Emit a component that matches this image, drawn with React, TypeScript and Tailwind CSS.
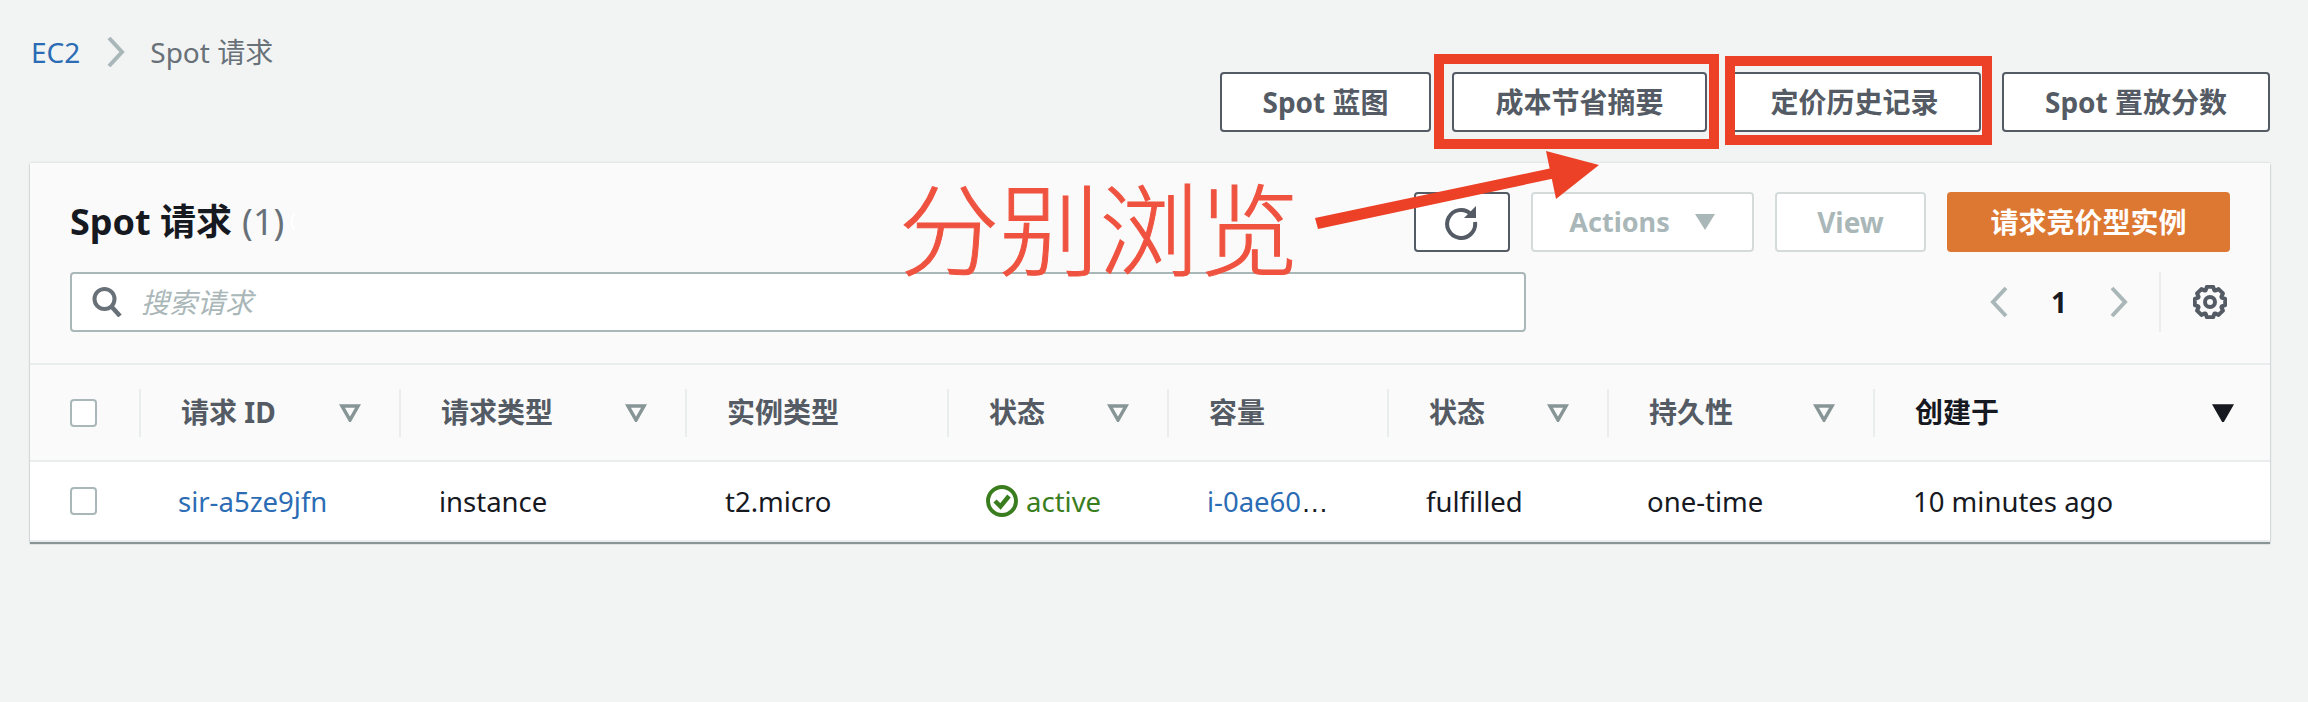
const FONT = "font-['Noto_Sans','Noto_Sans_CJK_SC',sans-serif]";

const gearPoints = Array.from({ length: 8 }, (_, i) => {
  const base = (i * Math.PI) / 4;
  const pts = [
    [12.5, base - 0.36],
    [15.5, base - 0.2],
    [15.5, base + 0.2],
    [12.5, base + 0.36],
  ];
  return pts
    .map(([r, a]) => `${(17 + r * Math.cos(a)).toFixed(2)},${(17 + r * Math.sin(a)).toFixed(2)}`)
    .join(" ");
}).join(" ");

function FilterCaret({ solid = false, color = "#879596" }: { solid?: boolean; color?: string }) {
  return (
    <svg width="22" height="18" viewBox="0 0 22 18" className="shrink-0">
      <polygon
        points="3,2 19,2 11,16"
        fill={solid ? color : "none"}
        stroke={color}
        strokeWidth="3.5"
        strokeLinejoin="miter"
      />
    </svg>
  );
}

function Checkbox() {
  return <div className="w-[27px] h-[28px] rounded-[4px] border-2 border-[#aab7b8] bg-white" />;
}

function Chevron({ dir }: { dir: "left" | "right" }) {
  return (
    <svg width="20" height="32" viewBox="0 0 20 32" fill="none" className="shrink-0">
      <path
        d={dir === "left" ? "M17 2 L4 16 L17 30" : "M3 2 L16 16 L3 30"}
        stroke="#aab7b8"
        strokeWidth="4"
      />
    </svg>
  );
}

function TopButton({ label, className }: { label: string; className: string }) {
  return (
    <button
      className={`h-[60px] rounded-[4px] border-2 border-[#545b64] bg-white text-[28px] font-bold text-[#545b64] ${className}`}
    >
      {label}
    </button>
  );
}

const COLUMNS = [
  { label: "请求 ID", width: "w-[260px]", filter: true },
  { label: "请求类型", width: "w-[286px]", filter: true },
  { label: "实例类型", width: "w-[262px]", filter: false },
  { label: "状态", width: "w-[220px]", filter: true },
  { label: "容量", width: "w-[220px]", filter: false },
  { label: "状态", width: "w-[220px]", filter: true },
  { label: "持久性", width: "w-[266px]", filter: true },
];

export default function App() {
  return (
    <div className={`relative w-[2308px] h-[702px] overflow-hidden bg-[#f2f3f3] ${FONT}`}>
      {/* Breadcrumb + top actions */}
      <div className="flex justify-between pl-[31px] pr-[38px] h-[163px]">
        <nav className="flex items-center h-[32px] mt-[36px] text-[28px] leading-none">
          <a className="text-[#2b6cb5]">EC2</a>
          <svg width="18" height="30" viewBox="0 0 18 30" fill="none" className="ml-[27px] mr-[25px]">
            <path d="M2 1 L15 15 L2 29" stroke="#aab7b8" strokeWidth="4" />
          </svg>
          <span className="text-[#687078]">Spot 请求</span>
        </nav>
        <div className="flex gap-[21px] mt-[72px] h-[60px]">
          <TopButton label="Spot 蓝图" className="w-[211px]" />
          <TopButton label="成本节省摘要" className="w-[255px]" />
          <TopButton label="定价历史记录" className="w-[253px]" />
          <TopButton label="Spot 置放分数" className="w-[268px]" />
        </div>
      </div>

      {/* Table card */}
      <div className="ml-[30px] mr-[38px] bg-white shadow-[0_2px_1px_0_#8a9396,0_0_2px_0_#c5cccc]">
        <div className="bg-[#fafafa] border-b-2 border-[#eaeded] pl-[40px] pr-[40px] pt-[29px] pb-[31px]">
          <div className="flex items-center justify-between h-[60px]">
            <h1 className="flex items-center text-[36px] font-bold text-[#16191f]">
              Spot 请求
              <span className="ml-[10px] font-normal text-[#687078]">(1)</span>
              <svg width="6" height="18" viewBox="0 0 6 18" fill="none" className="ml-[6px]">
                <path d="M4 1 C1 6 1 12 4 17" stroke="#ffffff" strokeWidth="2" />
              </svg>
            </h1>
            <div className="flex gap-[21px]">
              <button className="flex items-center justify-center w-[96px] h-[60px] rounded-[4px] border-2 border-[#545b64] bg-white">
                <svg width="36" height="36" viewBox="0 0 36 36" fill="none">
                  <path d="M27 10 A14 14 0 1 0 31 18" stroke="#545b64" strokeWidth="4" />
                  <polygon points="32,2 32,14 20,14" fill="#545b64" />
                </svg>
              </button>
              <button className="flex items-center justify-center gap-[24px] w-[223px] h-[60px] rounded-[4px] border-2 border-[#d5dbdb] bg-white text-[27px] font-bold text-[#aab7b8]">
                Actions
                <svg width="22" height="18" viewBox="0 0 22 18">
                  <polygon points="1,1 21,1 11,17" fill="#aab7b8" />
                </svg>
              </button>
              <button className="w-[151px] h-[60px] rounded-[4px] border-2 border-[#d5dbdb] bg-white text-[28px] font-bold text-[#aab7b8]">
                View
              </button>
              <button className="w-[283px] h-[60px] rounded-[4px] bg-[#dd7833] text-[28px] font-bold text-white">
                请求竞价型实例
              </button>
            </div>
          </div>
          <div className="flex items-center mt-[20px] h-[60px]">
            <div className="flex items-center w-[1456px] h-[60px] rounded-[4px] border-2 border-[#aab7b8] bg-white pl-[20px]">
              <svg width="30" height="30" viewBox="0 0 30 30" fill="none" className="shrink-0">
                <circle cx="12.5" cy="12" r="10" stroke="#687078" strokeWidth="4" />
                <path d="M19 19 L28 29" stroke="#687078" strokeWidth="4.5" />
              </svg>
              <span className="ml-[19px] text-[28px] italic text-[#aab7b8]">搜索请求</span>
            </div>
            <div className="flex items-center h-[60px] ml-[463px]">
              <Chevron dir="left" />
              <span className="w-[100px] text-center text-[28px] font-bold text-[#16191f]">1</span>
              <Chevron dir="right" />
              <div className="w-[2px] h-[60px] bg-[#eaeded] ml-[30px]" />
              <svg width="34" height="34" viewBox="0 0 34 34" fill="none" className="ml-[32px]">
                <polygon points={gearPoints} stroke="#545b64" strokeWidth="4" strokeLinejoin="round" />
                <circle cx="17" cy="17" r="5" stroke="#545b64" strokeWidth="4" />
              </svg>
            </div>
          </div>
        </div>

        {/* Table head */}
        <div className="flex items-center h-[95px] bg-[#fafafa] border-b-2 border-[#eaeded] box-content">
          <div className="w-[109px] pl-[40px]">
            <Checkbox />
          </div>
          {COLUMNS.map((col, i) => (
            <div
              key={i}
              className={`flex items-center justify-between h-[48px] border-l-2 border-[#eaeded] pl-[40px] pr-[38px] ${col.width}`}
            >
              <span className="pb-[2px] text-[28px] font-bold text-[#545b64] whitespace-nowrap">{col.label}</span>
              {col.filter && <FilterCaret />}
            </div>
          ))}
          <div className="flex items-center justify-between flex-1 h-[48px] border-l-2 border-[#eaeded] pl-[40px] pr-[36px]">
            <span className="pb-[2px] text-[28px] font-bold text-[#16191f]">创建于</span>
            <FilterCaret solid color="#16191f" />
          </div>
        </div>

        {/* Table row */}
        <div className="flex items-center h-[78px] text-[27.5px] text-[#16191f] border-b-2 border-[#eaeded] box-content">
          <div className="w-[109px] pl-[40px]">
            <Checkbox />
          </div>
          <div className="w-[260px] pl-[39px] pt-[2px] text-[#2b6cb5]">sir-a5ze9jfn</div>
          <div className="w-[286px] pl-[40px] pt-[2px]">instance</div>
          <div className="w-[262px] pl-[40px] pt-[2px]">t2.micro</div>
          <div className="flex items-center w-[220px] pl-[39px] text-[#3a7d1e]">
            <svg width="32" height="32" viewBox="0 0 32 32" fill="none" className="shrink-0">
              <circle cx="16" cy="16" r="14" stroke="#3a7d1e" strokeWidth="4" />
              <path d="M9 16 L14.5 21.5 L23 11" stroke="#3a7d1e" strokeWidth="4.5" />
            </svg>
            <span className="ml-[8px] pt-[2px]">active</span>
          </div>
          <div className="w-[220px] pl-[40px] pt-[2px] whitespace-nowrap">
            <span className="text-[#2b6cb5]">i-0ae60</span>
            <span className="font-['Liberation_Sans',sans-serif]">…</span>
          </div>
          <div className="w-[220px] pl-[39px] pt-[2px]">fulfilled</div>
          <div className="w-[266px] pl-[40px] pt-[2px]">one-time</div>
          <div className="flex-1 pl-[40px] pt-[2px]">10 minutes ago</div>
        </div>
      </div>

      {/* Red annotation drawn over the page */}
      <div className="absolute left-[1434px] top-[54px] w-[285px] h-[95px] border-[10px] border-[#ec4126]" />
      <div className="absolute left-[1725px] top-[56px] w-[267px] h-[89px] border-[10px] border-[#ec4126]" />
      <svg width="2308" height="702" viewBox="0 0 2308 702" className="absolute left-0 top-0 pointer-events-none">
        <polygon points="1315,218 1552,168 1556,178 1318,229" fill="#ec4126" />
        <polygon points="1546,151 1599,165 1556,199" fill="#ec4126" />
      </svg>
      <div className="absolute left-[899px] top-[165px] text-[100px] leading-[120px] whitespace-nowrap text-[#ef5340] font-['Noto_Sans_CJK_SC',sans-serif] font-light [-webkit-text-stroke:1px_#ef5340]">
        分别浏览
      </div>
    </div>
  );
}
